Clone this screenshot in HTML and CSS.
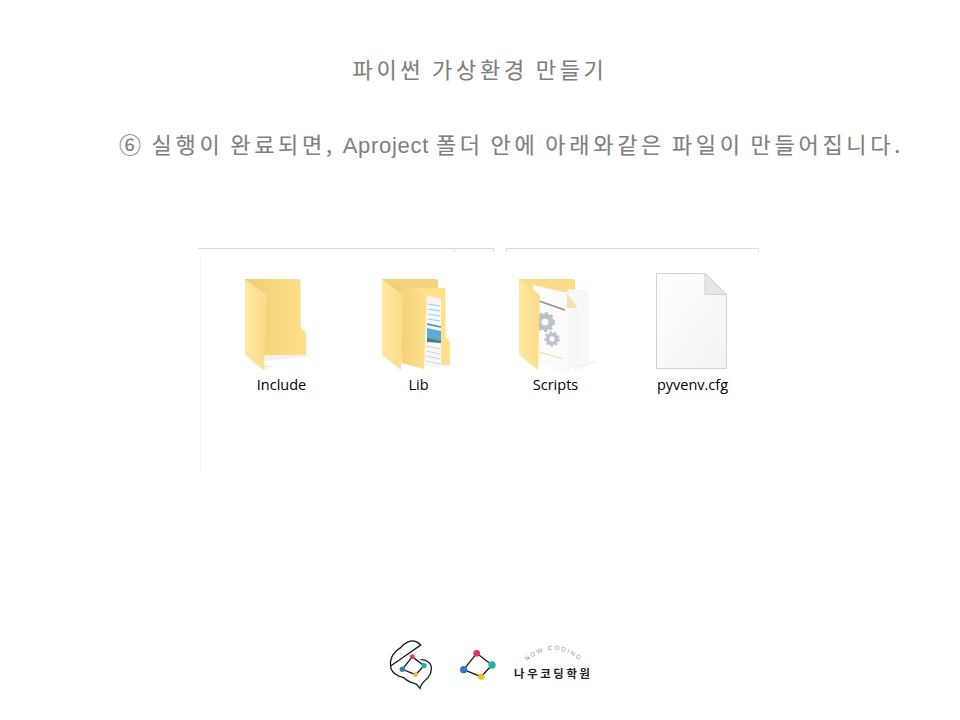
FILE: index.html
```html
<!DOCTYPE html>
<html lang="ko">
	<head>
		<meta charset="UTF-8" />
		<title>파이썬 가상환경 만들기</title>
		<link rel="stylesheet" href="styles.css">
	</head>
	<body>
		<h1 class="title">파이썬 가상환경 만들기</h1>
		<p class="step">⑥ 실행이 완료되면, <span class="latin">Aproject</span> 폴더 안에 아래와같은 파일이 만들어집니다.</p>

		<div class="explorer">
			<div class="toolbar">
				<div class="rule rule-left"><span class="tick"></span></div>
				<div class="rule rule-right"></div>
			</div>
			<div class="files">
				<div class="file">
					<svg class="icon" viewBox="212 270 137 102" width="137" height="102">
						<defs>
							<linearGradient id="back" x1="0" x2="1" y1="0" y2="0">
								<stop offset="0" stop-color="#efcd74" />
								<stop offset="1" stop-color="#ffe08a" />
							</linearGradient>
							<linearGradient id="front" x1="0" x2="1" y1="0" y2="0">
								<stop offset="0" stop-color="#ffe8a3" />
								<stop offset="1" stop-color="#fbdc88" />
							</linearGradient>
						</defs>
						<path d="M264 355H306L314 356L264 361ZM250 362L264 370L274 366Z" fill="#f1f1f1" />
						<path d="M245 279H299Q300.500 279 300.500 281V327L306 333V355H262Z" fill="url(#back)" />
						<path d="M245 279L266 295L264 370L245 355Z" fill="url(#front)" />
					</svg>
					<span class="name">Include</span>
				</div>
				<div class="file">
					<svg class="icon" viewBox="349 270 137 102" width="137" height="102">
						<path d="M382 279H436Q438 279 438 281V292H382Z" fill="#f3d27c" />
						<path d="M400 288H444Q445.500 288 445.500 290V337L450 342V364Q450 365 449 365H410Z" fill="#ffe08a" />
						<path d="M426 295L441 299V369L424 365Z" fill="#f7f7f7" />
						<path d="M428 304L440 306M428 309L440 311M428 314L440 316M428 319L440 321" stroke="#8fcdf0" stroke-width="1" />
						<path d="M427 324L441 327" stroke="#2f8fd0" stroke-width="1.500" />
						<path d="M427 328L441 331V343L427 340Z" fill="#5fa9d6" />
						<path d="M427 338L441 341V343L427 342Z" fill="#4f7f6a" />
						<path d="M426 346L440 349M426 351L440 354M426 356L440 359M426 361L440 364" stroke="#cfd2d4" stroke-width="1" />
						<path d="M392 282L427 293L425 342L424 369L402 363Z" fill="url(#back)" />
						<path d="M382 279L403 295L401 370L382 355Z" fill="url(#front)" />
					</svg>
					<span class="name">Lib</span>
				</div>
				<div class="file">
					<svg class="icon" viewBox="486 270 137 102" width="137" height="102">
						<path d="M519 279H573Q575 279 575 281V292H519Z" fill="#fbdc84" />
						<path d="M568 289L588 291V365L576 366L596 362L576 369L568 366Z" fill="#f8f8f9" stroke="#ededee" stroke-width="0.500" />
						<path d="M533 285L567 293L577 308V360L567 372L538 360Z" fill="#fbfbfb" stroke="#eeeeee" stroke-width="0.500" />
						<path d="M567 293L577 308H567Z" fill="#f5e2ae" />
						<path d="M567 308H577V360L567 372Z" fill="#f8f8f8" />
						<path d="M539 301L565 310" stroke="#8c9095" stroke-width="1.500" />
						<path d="M539 352L564 359" stroke="#f1dda4" stroke-width="1" />
						<g fill="none" stroke="#b8c2ca">
							<circle cx="545" cy="322" r="6" stroke-width="5" />
							<circle cx="545" cy="322" r="9" stroke-width="2" stroke-dasharray="3 3" />
							<circle cx="552" cy="339" r="4.500" stroke-width="3.500" />
							<circle cx="552" cy="339" r="7" stroke-width="1.500" stroke-dasharray="2.500 2.500" />
						</g>
						<path d="M519 279L540 295L538 370L519 355Z" fill="url(#front)" />
					</svg>
					<span class="name">Scripts</span>
				</div>
				<div class="file">
					<svg class="icon" viewBox="623 270 137 102" width="137" height="102">
						<defs>
							<linearGradient id="paper" x1="0" x2="1" y1="0" y2="1">
								<stop offset="0" stop-color="#ffffff" />
								<stop offset="1" stop-color="#f1f3f4" />
							</linearGradient>
						</defs>
						<path d="M656.500 273.500H705L726.500 294.500V368.500H656.500Z" fill="url(#paper)" stroke="#d2d2d2" />
						<path d="M705 273.500V294.500H726.500Z" fill="#e6e6e6" stroke="#d2d2d2" />
					</svg>
					<span class="name">pyvenv.cfg</span>
				</div>
			</div>
		</div>

		<div class="footer">
			<svg class="logo" viewBox="0 0 675 195" width="225" height="65">
				<defs>
					<path id="arc" d="M440 92Q520 22 602 92" />
				</defs>
				<g fill="none" stroke="#1a1a1a" stroke-width="4">
					<path d="M32 105C28 80 44 60 62 50C72 36 92 26 106 31C112 33 118 37 122 42L32 105C32 124 52 136 72 140C80 152 100 156 110 160L120 172C122 158 134 150 144 140C156 126 158 104 146 94C138 87 130 85 122 86" />
					<path d="M97 77L132 104L107 131L67 115Z" />
				</g>
				<circle cx="97" cy="77" r="7" fill="#e5326b" />
				<circle cx="132" cy="104" r="8" fill="#1fb5a5" />
				<circle cx="107" cy="131" r="7" fill="#fbbc13" />
				<circle cx="67" cy="115" r="8" fill="#3b78c2" />
				<path d="M290 67L336 102L303 137L251 116Z" fill="none" stroke="#1a1a1a" stroke-width="4" />
				<circle cx="290" cy="67" r="10" fill="#e5326b" />
				<circle cx="336" cy="102" r="11" fill="#1fb5a5" />
				<circle cx="303" cy="137" r="9" fill="#fbbc13" />
				<circle cx="251" cy="116" r="11" fill="#3b78c2" />
				<text class="logo-arc"><textPath href="#arc" startOffset="50%" text-anchor="middle">NOW CODING</textPath></text>
				<text class="logo-name" x="520" y="141" text-anchor="middle">나우코딩학원</text>
			</svg>
		</div>
	</body>
</html>
```

FILE: styles.css
```css
html,
body {
	margin: 0;
	height: 720px;
	overflow: hidden;
	background: white;
}
body {
	font-family: "Noto Sans CJK KR", "Noto Sans", sans-serif;
	color: #7f7f7f;
}
.title {
	margin: 0;
	padding-top: 52px;
	height: 33px;
	line-height: 33px;
	font-size: 22px;
	font-weight: 400;
	letter-spacing: 3.7px;
	word-spacing: -2px;
	text-align: center;
	-webkit-text-stroke: 0.15px #7f7f7f;
}
.step {
	margin: 0;
	padding: 42px 0 0 119px;
	height: 33px;
	line-height: 33px;
	font-size: 22px;
	font-weight: 400;
	letter-spacing: 3.7px;
	word-spacing: -3px;
	white-space: nowrap;
	-webkit-text-stroke: 0.15px #7f7f7f;
}
.latin {
	font-family: "Liberation Sans", sans-serif;
	letter-spacing: 0.7px;
	-webkit-text-stroke: 0;
}
.explorer {
	margin: 88px 0 0 198px;
	width: 561px;
}
.toolbar {
	display: flex;
	gap: 12px;
	height: 7px;
}
.rule {
	display: flex;
	justify-content: flex-end;
	height: 3px;
	border: 1px solid #dcdcdc;
	border-bottom: none;
	border-left: none;
}
.rule-left {
	width: 295px;
}
.rule-right {
	width: 251px;
	border-left: 1px solid #dcdcdc;
}
.tick {
	width: 38px;
	height: 3px;
	border-left: 1px solid #dcdcdc;
}
.files {
	display: flex;
	margin-left: 2px;
	padding-left: 11px;
	padding-top: 15px;
	height: 202px;
	border-left: 1px solid #f5f5f5;
}
.file {
	display: flex;
	flex-direction: column;
	align-items: center;
	width: 137px;
}
.icon {
	display: block;
}
.name {
	margin: 3px 0 0 2px;
	font-family: "Open Sans", sans-serif;
	font-size: 14.5px;
	line-height: 20px;
	color: #000;
}
.footer {
	padding: 159px 0 0 380px;
}
.logo {
	display: block;
}
.logo-arc {
	font-family: "Liberation Sans", sans-serif;
	font-size: 19px;
	letter-spacing: 5px;
	fill: #999;
}
.logo-name {
	font-size: 34px;
	font-weight: 700;
	letter-spacing: 8px;
	fill: #222;
}
```
